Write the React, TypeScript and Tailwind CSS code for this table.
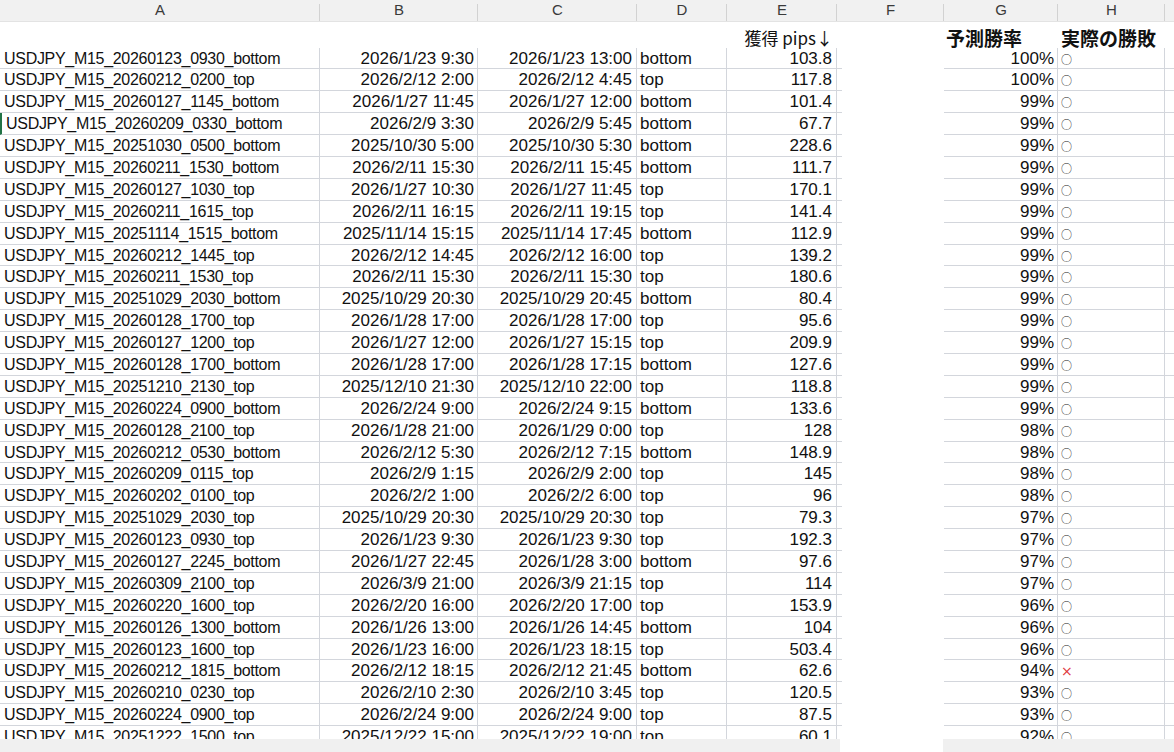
const ROWS: string[][] = [
  ['USDJPY_M15_20260123_0930_bottom', '2026/1/23 9:30', '2026/1/23 13:00', 'bottom', '103.8', '100%', '○'],
  ['USDJPY_M15_20260212_0200_top', '2026/2/12 2:00', '2026/2/12 4:45', 'top', '117.8', '100%', '○'],
  ['USDJPY_M15_20260127_1145_bottom', '2026/1/27 11:45', '2026/1/27 12:00', 'bottom', '101.4', '99%', '○'],
  ['USDJPY_M15_20260209_0330_bottom', '2026/2/9 3:30', '2026/2/9 5:45', 'bottom', '67.7', '99%', '○'],
  ['USDJPY_M15_20251030_0500_bottom', '2025/10/30 5:00', '2025/10/30 5:30', 'bottom', '228.6', '99%', '○'],
  ['USDJPY_M15_20260211_1530_bottom', '2026/2/11 15:30', '2026/2/11 15:45', 'bottom', '111.7', '99%', '○'],
  ['USDJPY_M15_20260127_1030_top', '2026/1/27 10:30', '2026/1/27 11:45', 'top', '170.1', '99%', '○'],
  ['USDJPY_M15_20260211_1615_top', '2026/2/11 16:15', '2026/2/11 19:15', 'top', '141.4', '99%', '○'],
  ['USDJPY_M15_20251114_1515_bottom', '2025/11/14 15:15', '2025/11/14 17:45', 'bottom', '112.9', '99%', '○'],
  ['USDJPY_M15_20260212_1445_top', '2026/2/12 14:45', '2026/2/12 16:00', 'top', '139.2', '99%', '○'],
  ['USDJPY_M15_20260211_1530_top', '2026/2/11 15:30', '2026/2/11 15:30', 'top', '180.6', '99%', '○'],
  ['USDJPY_M15_20251029_2030_bottom', '2025/10/29 20:30', '2025/10/29 20:45', 'bottom', '80.4', '99%', '○'],
  ['USDJPY_M15_20260128_1700_top', '2026/1/28 17:00', '2026/1/28 17:00', 'top', '95.6', '99%', '○'],
  ['USDJPY_M15_20260127_1200_top', '2026/1/27 12:00', '2026/1/27 15:15', 'top', '209.9', '99%', '○'],
  ['USDJPY_M15_20260128_1700_bottom', '2026/1/28 17:00', '2026/1/28 17:15', 'bottom', '127.6', '99%', '○'],
  ['USDJPY_M15_20251210_2130_top', '2025/12/10 21:30', '2025/12/10 22:00', 'top', '118.8', '99%', '○'],
  ['USDJPY_M15_20260224_0900_bottom', '2026/2/24 9:00', '2026/2/24 9:15', 'bottom', '133.6', '99%', '○'],
  ['USDJPY_M15_20260128_2100_top', '2026/1/28 21:00', '2026/1/29 0:00', 'top', '128', '98%', '○'],
  ['USDJPY_M15_20260212_0530_bottom', '2026/2/12 5:30', '2026/2/12 7:15', 'bottom', '148.9', '98%', '○'],
  ['USDJPY_M15_20260209_0115_top', '2026/2/9 1:15', '2026/2/9 2:00', 'top', '145', '98%', '○'],
  ['USDJPY_M15_20260202_0100_top', '2026/2/2 1:00', '2026/2/2 6:00', 'top', '96', '98%', '○'],
  ['USDJPY_M15_20251029_2030_top', '2025/10/29 20:30', '2025/10/29 20:30', 'top', '79.3', '97%', '○'],
  ['USDJPY_M15_20260123_0930_top', '2026/1/23 9:30', '2026/1/23 9:30', 'top', '192.3', '97%', '○'],
  ['USDJPY_M15_20260127_2245_bottom', '2026/1/27 22:45', '2026/1/28 3:00', 'bottom', '97.6', '97%', '○'],
  ['USDJPY_M15_20260309_2100_top', '2026/3/9 21:00', '2026/3/9 21:15', 'top', '114', '97%', '○'],
  ['USDJPY_M15_20260220_1600_top', '2026/2/20 16:00', '2026/2/20 17:00', 'top', '153.9', '96%', '○'],
  ['USDJPY_M15_20260126_1300_bottom', '2026/1/26 13:00', '2026/1/26 14:45', 'bottom', '104', '96%', '○'],
  ['USDJPY_M15_20260123_1600_top', '2026/1/23 16:00', '2026/1/23 18:15', 'top', '503.4', '96%', '○'],
  ['USDJPY_M15_20260212_1815_bottom', '2026/2/12 18:15', '2026/2/12 21:45', 'bottom', '62.6', '94%', '×'],
  ['USDJPY_M15_20260210_0230_top', '2026/2/10 2:30', '2026/2/10 3:45', 'top', '120.5', '93%', '○'],
  ['USDJPY_M15_20260224_0900_top', '2026/2/24 9:00', '2026/2/24 9:00', 'top', '87.5', '93%', '○'],
  ['USDJPY_M15_20251222_1500_top', '2025/12/22 15:00', '2025/12/22 19:00', 'top', '60.1', '92%', '○'],
]

const LETTERS = ['A', 'B', 'C', 'D', 'E', 'F', 'G', 'H']
const WIDTHS = ['w-[320px]', 'w-[158px]', 'w-[159px]', 'w-[90px]', 'w-[110px]', 'w-[107px]', 'w-[114px]', 'w-[107px]']

function ColumnHeader() {
  return (
    <div className="flex h-[22px] shrink-0 bg-[#f1f1f1] text-[15px] text-[#3a3a3a] border-b border-[#e3e3e3]">
      {LETTERS.map((l, i) => (
        <div key={l} className={`${WIDTHS[i]} relative flex items-center justify-center shrink-0`}>
          {l}
          <span className="absolute right-0 top-[4px] bottom-0 w-px bg-[#d2d2d2]" />
        </div>
      ))}
      <div className="flex-1" />
    </div>
  )
}

function DataRow({ r, idx }: { r: string[]; idx: number }) {
  const cell = 'shrink-0 border-b border-r border-[#d3d6dc] overflow-hidden whitespace-nowrap'
  return (
    <div className="flex h-[21.9px] shrink-0 leading-[22px]">
      <div className={`w-[320px] pl-[4px] text-[16px] tracking-[-0.3px] ${cell} ${idx === 3 ? 'border-l-2 border-l-[#217346]' : ''}`}>{r[0]}</div>
      <div className={`w-[158px] pr-[3px] text-right ${cell}`}>{r[1]}</div>
      <div className={`w-[159px] pr-[4px] text-right ${cell}`}>{r[2]}</div>
      <div className={`w-[90px] pl-[3px] ${cell}`}>{r[3]}</div>
      <div className={`w-[110px] pr-[4px] text-right ${cell}`}>{r[4]}</div>
      <div className="w-[107px] shrink-0">
        <div className="w-[5px] h-full border-b border-[#d3d6dc]" />
      </div>
      <div className={`w-[114px] pr-[3px] text-right ${cell}`}>{r[5]}</div>
      <div className={`w-[107px] pl-[3px] ${cell}`}>
        {r[6] === '×' ? (
          <span className="text-[#e0383b] text-[14px] font-['DejaVu_Sans',sans-serif]">{r[6]}</span>
        ) : (
          <span className="text-[11px] text-[#222] font-['Noto_Sans_CJK_JP',sans-serif]">{r[6]}</span>
        )}
      </div>
      <div className="flex-1 border-b border-[#d3d6dc]" />
    </div>
  )
}

export default function App() {
  return (
    <div className="w-[1174px] h-[752px] overflow-hidden flex flex-col bg-white text-[#111] text-[17px] font-['Liberation_Sans','Noto_Sans_CJK_JP',sans-serif]">
      <ColumnHeader />
      <div className="flex-1 overflow-hidden flex flex-col">
        <div className="flex h-[25.5px] shrink-0 items-end pb-[1px] whitespace-nowrap">
          <div className="w-[320px] shrink-0" />
          <div className="w-[158px] shrink-0" />
          <div className="w-[159px] shrink-0" />
          <div className="w-[90px] shrink-0" />
          <div className="w-[110px] shrink-0 pr-[4px] pb-[1px] text-right text-[17px] font-['Noto_Sans_CJK_JP',sans-serif] leading-none">獲得 pips↓</div>
          <div className="w-[107px] shrink-0" />
          <div className="w-[114px] shrink-0 pl-[2px] text-[19px] font-bold font-['Noto_Sans_CJK_JP',sans-serif] leading-none">予測勝率</div>
          <div className="w-[107px] shrink-0 pl-[3px] text-[19px] font-bold font-['Noto_Sans_CJK_JP',sans-serif] leading-none">実際の勝敗</div>
          <div className="flex-1" />
        </div>
        {ROWS.map((r, i) => (
          <DataRow key={i} r={r} idx={i} />
        ))}
      </div>
      <div className="flex h-[13px] shrink-0">
        <div className="w-[840px] bg-[#f0f0f0]" />
        <div className="w-[103px] bg-white" />
        <div className="flex-1 bg-[#f0f0f0]" />
      </div>
    </div>
  )
}
